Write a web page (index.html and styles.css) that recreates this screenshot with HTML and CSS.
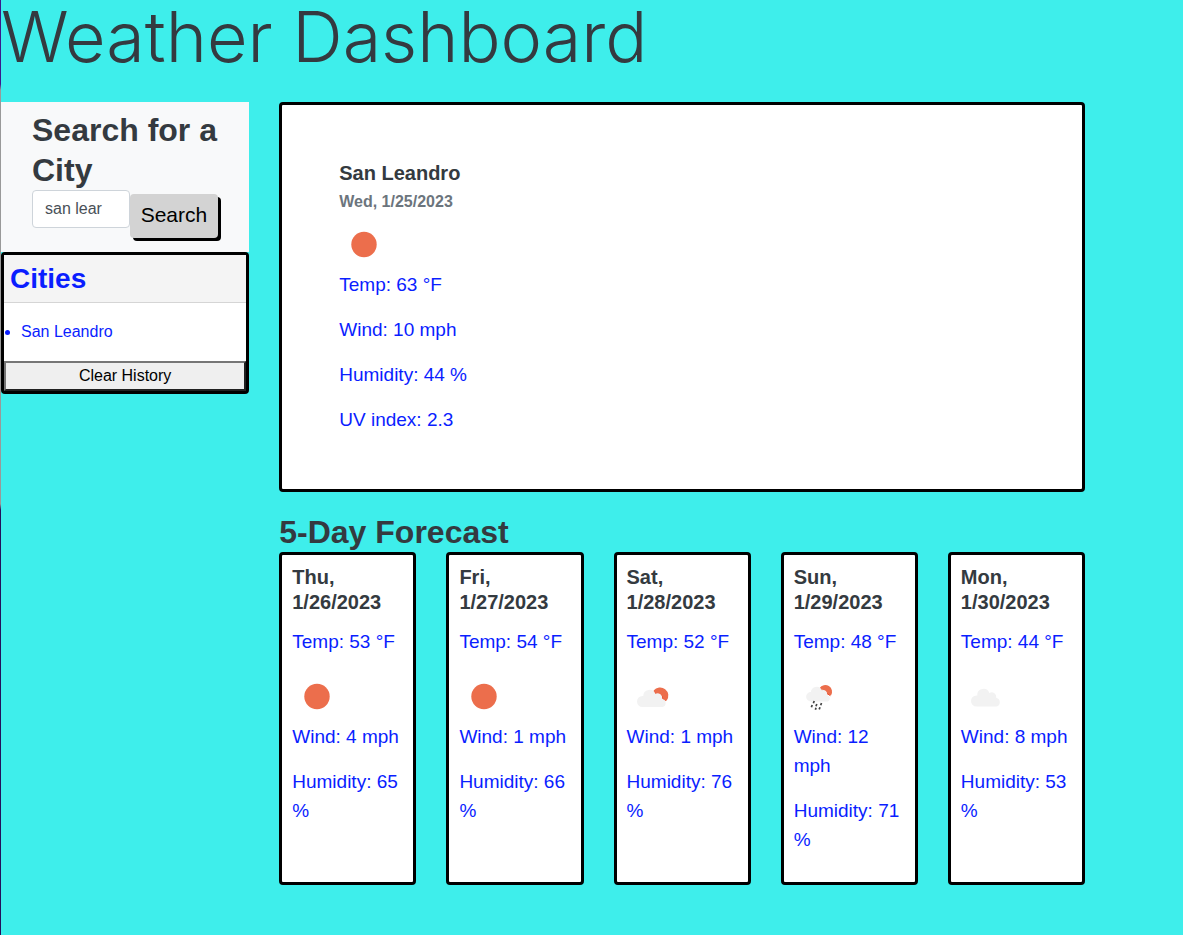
FILE: index.html
```html
<!DOCTYPE html>
<html lang="en">
<head>
<meta charset="utf-8">
<meta name="viewport" content="width=device-width, initial-scale=1">
<title>Weather Dashboard</title>
<link rel="stylesheet" href="styles.css">
</head>
<body>
<svg class="symbols" aria-hidden="true">
  <symbol id="sun" viewBox="0 0 50 50"><circle cx="25" cy="24.500" r="12.700" fill="#ec6e4c"/></symbol>
  <symbol id="cloud" viewBox="0 0 50 50"><path d="M15.500 34.500a5.500 5.500 0 0 1 0-11h.8a6.200 6.200 0 0 1 12-2.600 4.800 4.800 0 0 1 7 5.200A4.300 4.300 0 0 1 35.500 34.500z" fill="#f2f2f2"/></symbol>
  <symbol id="partly" viewBox="0 0 50 50"><path d="M26.600 18.600A7.700 7.700 0 1 1 39.600 28.700L35 26.500Q34 22 29 22.500z" fill="#ec6e4c"/><path d="M26.600 19l2.600 3.500 3-.8 3 2.600.6 2.800 3 1.600" fill="none" stroke="#e8502f" stroke-width="1"/><path d="M15.500 35a5.500 5.500 0 0 1 0-11h.8a6.200 6.200 0 0 1 12-2.200 4.800 4.800 0 0 1 7 5.200A4.100 4.100 0 0 1 35.500 35z" fill="#f2f2f2"/></symbol>
  <symbol id="rain" viewBox="0 0 50 50"><path d="M25.500 16.200A6.800 6.800 0 1 1 37 23.500L33 22Q31 17 27 18z" fill="#ec6e4c"/><path d="M26 16.500l2 2.500 3-.2 1.800 2.600 3.500 2.300" fill="none" stroke="#e8502f" stroke-width="1"/><path d="M16.800 29.500a4.700 4.700 0 0 1 0-9.400 5.800 5.800 0 0 1 11.100-1.800 4 4 0 0 1 5.200 4.700A3.500 3.500 0 0 1 34 29.500z" fill="#f2f2f2"/><path d="M20.200 29l-.8 2.200M18.200 33l-.8 2.200M22.800 32l-.8 2.200M27.500 31l-.8 2.200M22 35.700l-.6 2M26 35.200l-.8 2.200" stroke="#444" stroke-width="1.700"/></symbol>
</svg>
<header><h1 class="title">Weather Dashboard</h1></header>
<div class="dashboard">
  <aside class="sidebar">
    <form class="search">
      <h2 class="heading"><label for="city">Search for a City</label></h2>
      <div class="search-row">
        <input class="search-input" id="city" type="text" value="san lear">
        <button class="search-button" type="button">Search</button>
      </div>
    </form>
    <section class="history">
      <h3 class="history-title">Cities</h3>
      <ul class="history-list"><li>San Leandro</li></ul>
      <button class="clear-button" type="button">Clear History</button>
    </section>
  </aside>
  <main class="content">
    <section class="card current">
      <h5 class="card-title">San Leandro</h5>
      <h6 class="card-date">Wed, 1/25/2023</h6>
      <svg class="icon"><use href="#sun"/></svg>
      <p>Temp: 63 °F</p>
      <p>Wind: 10 mph</p>
      <p>Humidity: 44 %</p>
      <p>UV index: 2.3</p>
    </section>
    <h2 class="heading forecast-heading">5-Day Forecast</h2>
    <div class="forecast">
      <article class="card day">
        <h5 class="card-title">Thu, 1/26/2023</h5>
        <p>Temp: 53 °F</p>
        <svg class="icon"><use href="#sun"/></svg>
        <p>Wind: 4 mph</p>
        <p>Humidity: 65 %</p>
      </article>
      <article class="card day">
        <h5 class="card-title">Fri, 1/27/2023</h5>
        <p>Temp: 54 °F</p>
        <svg class="icon"><use href="#sun"/></svg>
        <p>Wind: 1 mph</p>
        <p>Humidity: 66 %</p>
      </article>
      <article class="card day">
        <h5 class="card-title">Sat, 1/28/2023</h5>
        <p>Temp: 52 °F</p>
        <svg class="icon"><use href="#partly"/></svg>
        <p>Wind: 1 mph</p>
        <p>Humidity: 76 %</p>
      </article>
      <article class="card day">
        <h5 class="card-title">Sun, 1/29/2023</h5>
        <p>Temp: 48 °F</p>
        <svg class="icon"><use href="#rain"/></svg>
        <p>Wind: 12 mph</p>
        <p>Humidity: 71 %</p>
      </article>
      <article class="card day">
        <h5 class="card-title">Mon, 1/30/2023</h5>
        <p>Temp: 44 °F</p>
        <svg class="icon"><use href="#cloud"/></svg>
        <p>Wind: 8 mph</p>
        <p>Humidity: 53 %</p>
      </article>
    </div>
  </main>
</div>
</body>
</html>
```
FILE: styles.css
```css
* { box-sizing: border-box; }

html {
  min-height: 100%;
  background: linear-gradient(#3a1a8c 0 84px, #999 90px 504px, #24105c 510px) 0 0 / 1px 100% no-repeat, #3eeeeb;
}

body {
  margin: 0 0 0 1px;
  color: #343a40;
  font-family: "Liberation Sans", Arial, sans-serif;
  font-size: 16px;
  line-height: 24px;
}

h1, h2, h3, h5, h6, p, ul { margin: 0; }

.symbols { display: none; }

.title {
  padding-bottom: 28px;
  font-family: Inter, sans-serif;
  font-size: 70px;
  font-weight: 300;
  line-height: 74px;
}

.dashboard {
  display: grid;
  grid-template-columns: 22.9% 1fr;
  gap: 30px;
  align-items: start;
  padding: 0 98px 48px 0;
}

.heading {
  font-size: 32px;
  font-weight: 700;
  line-height: 40px;
}

.search {
  padding: 8px 29px 11px 31px;
  background: #f8f9fa;
}

.search-row {
  display: flex;
  align-items: flex-start;
}

.search-input {
  flex: 1;
  min-width: 0;
  height: 38px;
  padding: 6px 12px;
  border: 1px solid #ced4da;
  border-radius: 4px;
  background: #fff;
  color: #495057;
  font: inherit;
}

.search-button {
  margin: 4px 2px 3px 0;
  padding: 9px 11px 11px;
  border: 0;
  border-radius: 4px;
  background: #d3d3d3;
  box-shadow: 3px 3px #000;
  color: #000;
  font-family: inherit;
  font-size: 21px;
  line-height: 24px;
}

.history {
  border: 3px solid #000;
  border-radius: 4px;
  background: #fff;
  color: #0a1eff;
}

.history-title {
  padding: 6px;
  border-bottom: 1px solid #d5d5d5;
  background: #f4f4f4;
  font-size: 28px;
  line-height: 35px;
}

.history-list {
  padding: 17px;
}

.clear-button {
  display: block;
  width: 100%;
  padding: 1px 6px;
  border: 2px outset #767676;
  background: #efefef;
  color: #000;
  font: inherit;
}

.card {
  border: 3px solid #000;
  border-radius: 4px;
  background: #fff;
}

.card p {
  margin-bottom: 16px;
  color: #0a1eff;
  font-size: 19px;
  line-height: 29px;
}

.card-title {
  font-size: 20px;
  line-height: 25px;
}

.card-date {
  margin: 4px 0 6px;
  color: #6c757d;
  font-size: 16px;
}

.icon {
  display: block;
  width: 50px;
  height: 50px;
}

.current { padding: 56px 57px 39px; }

.forecast-heading { margin-top: 20px; }

.forecast {
  display: grid;
  grid-template-columns: repeat(5, 1fr);
  gap: 30px;
}

.day { padding: 10px 10px 12px; }

.day .card-title { margin-bottom: 12px; }
```
